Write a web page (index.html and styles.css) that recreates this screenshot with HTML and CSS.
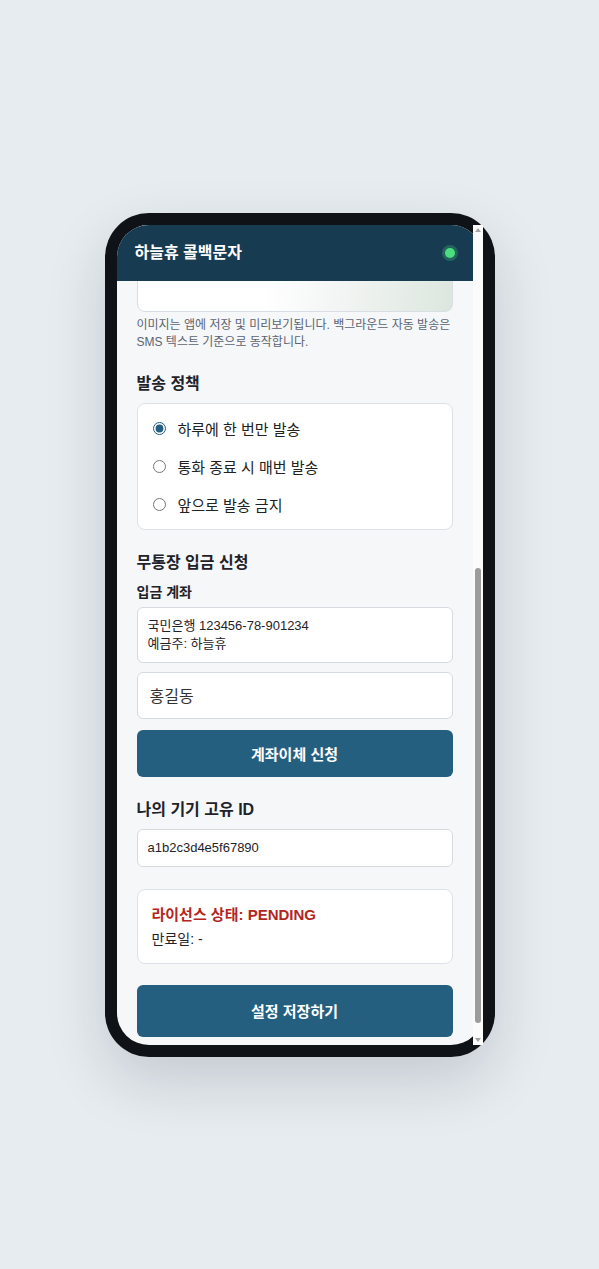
FILE: index.html
```html
<!DOCTYPE html>
<html lang="ko">
<head>
<meta charset="utf-8">
<title>하늘휴 콜백문자</title>
<link rel="stylesheet" href="styles.css">
</head>
<body>
<div class="phone">
  <div class="screen">
    <div class="scroller" id="scroller">
      <header class="app-bar">
        <h1 class="app-title">하늘휴 콜백문자</h1>
        <span class="status-dot"></span>
      </header>
      <main class="content">
        <section class="section">
          <h2 class="section-title">발신 번호</h2>
          <input class="field" type="text" value="010-1234-5678">
        </section>
        <section class="section">
          <h2 class="section-title">발송 메시지</h2>
          <textarea class="field textarea">안녕하세요, 하늘휴입니다. 지금은 통화가 어렵습니다. 확인 후 연락드리겠습니다.</textarea>
          <p class="hint">최대 90바이트까지 SMS로 발송됩니다.</p>
        </section>
        <section class="section">
          <h2 class="section-title">이미지 첨부</h2>
          <button class="btn-outline" type="button">이미지 선택</button>
          <div class="preview"></div>
          <p class="hint">이미지는 앱에 저장 및 미리보기됩니다. 백그라운드 자동 발송은 SMS 텍스트 기준으로 동작합니다.</p>
        </section>
        <section class="section">
          <h2 class="section-title">발송 정책</h2>
          <div class="card radio-card">
            <label class="radio-row"><input type="radio" name="policy" checked><span>하루에 한 번만 발송</span></label>
            <label class="radio-row"><input type="radio" name="policy"><span>통화 종료 시 매번 발송</span></label>
            <label class="radio-row"><input type="radio" name="policy"><span>앞으로 발송 금지</span></label>
          </div>
        </section>
        <section class="section">
          <h2 class="section-title">무통장 입금 신청</h2>
          <h3 class="label">입금 계좌</h3>
          <div class="account-box">국민은행 123456-78-901234<br>예금주: 하늘휴</div>
          <input class="field name-input" type="text" value="홍길동">
          <button class="btn-primary transfer-btn" type="button">계좌이체 신청</button>
        </section>
        <section class="section">
          <h2 class="section-title">나의 기기 고유 ID</h2>
          <div class="id-box">a1b2c3d4e5f67890</div>
        </section>
        <section class="section card license-card">
          <p class="license-status">라이선스 상태: PENDING</p>
          <p class="license-exp">만료일: -</p>
        </section>
        <button class="btn-primary save-btn" id="save" type="button">설정 저장하기</button>
      </main>
    </div>
    <div class="scrollbar" aria-hidden="true">
      <span class="sb-arrow sb-up"></span>
      <div class="sb-track"><div class="sb-thumb" id="thumb"></div></div>
      <span class="sb-arrow sb-down"></span>
    </div>
  </div>
</div>
<script src="script.js"></script>
</body>
</html>
```

FILE: styles.css
```css
* { box-sizing: border-box; }

html, body { margin: 0; padding: 0; }

body {
  min-height: 100vh;
  background: #e7ecf0;
  font-family: "Liberation Sans", "Noto Sans CJK KR", sans-serif;
  color: #1f2329;
  display: flex;
  align-items: center;
  justify-content: center;
}

.phone {
  width: 390px;
  height: 844px;
  padding: 12px;
  background: #0f1318;
  border-radius: 44px;
  box-shadow: 0 24px 60px rgba(15, 23, 42, 0.16);
}

.screen {
  position: relative;
  width: 100%;
  height: 100%;
  background: #f5f7f9;
  border-radius: 32px;
}

.scroller {
  position: relative;
  width: 100%;
  height: 100%;
  padding-right: 10px;
  border-radius: 32px;
  overflow-y: auto;
  scrollbar-width: none;
}

.scroller::-webkit-scrollbar { display: none; }

.app-bar {
  position: sticky;
  top: 0;
  z-index: 2;
  height: 56px;
  padding: 0 18px;
  background: #173b50;
  display: flex;
  align-items: center;
  justify-content: space-between;
}

.app-title {
  margin: 0;
  color: #ffffff;
  font-size: 16px;
  font-weight: 700;
  line-height: 22px;
}

.status-dot {
  width: 10px;
  height: 10px;
  border-radius: 50%;
  background: #4ade80;
  box-shadow: 0 0 0 3px rgba(74, 222, 128, 0.25);
}

.content {
  padding: 20px 20px 26px;
}

.section { margin-top: 22px; }
.section:first-child { margin-top: 0; }

.section-title {
  margin: 0 0 8px;
  font-size: 16px;
  font-weight: 700;
  line-height: 22px;
  color: #1f2329;
}

.label {
  margin: 0 0 5px;
  font-size: 14px;
  font-weight: 700;
  line-height: 20px;
  color: #1f2329;
}

.field {
  display: block;
  width: 100%;
  height: 44px;
  padding: 0 12px;
  border: 1px solid #d6dbe1;
  border-radius: 6px;
  background: #ffffff;
  font-family: inherit;
  font-size: 15px;
  color: #1f2329;
}

.textarea {
  height: 150px;
  padding: 10px 12px;
  resize: none;
  line-height: 20px;
}

.hint {
  margin: 5px 0 0;
  font-size: 12px;
  line-height: 17px;
  color: #5b6472;
}

.btn-outline {
  display: block;
  width: 100%;
  height: 44px;
  border: 1px solid #255f80;
  border-radius: 6px;
  background: #ffffff;
  color: #255f80;
  font-family: inherit;
  font-size: 14px;
  font-weight: 700;
}

.preview {
  margin-top: 10px;
  height: 206px;
  border: 1px solid #d9dee4;
  border-radius: 8px;
  background: linear-gradient(100deg, #ffffff 45%, #f4f6f5 65%, #dce6de 100%);
}

.card {
  background: #ffffff;
  border: 1px solid #dde2e8;
  border-radius: 8px;
}

.radio-card {
  padding: 6px 15px 5px;
}

.radio-row {
  display: flex;
  align-items: center;
  height: 38px;
  gap: 12px;
  font-size: 15px;
  color: #222;
}

.radio-row input {
  margin: 0;
  width: 13px;
  height: 13px;
  accent-color: #255f80;
}

.account-box {
  padding: 9px 10px;
  background: #ffffff;
  border: 1px solid #d6dbe1;
  border-radius: 6px;
  font-size: 13px;
  line-height: 18px;
  color: #1f2329;
}

.name-input {
  margin-top: 9px;
  height: 47px;
  font-size: 16px;
  color: #333;
}

.btn-primary {
  display: block;
  width: 100%;
  border: 0;
  border-radius: 6px;
  background: #255f80;
  color: #ffffff;
  font-family: inherit;
  font-size: 15px;
  font-weight: 700;
}

.transfer-btn {
  margin-top: 11px;
  height: 47px;
}

.id-box {
  height: 38px;
  padding: 0 10px;
  background: #ffffff;
  border: 1px solid #d6dbe1;
  border-radius: 6px;
  font-size: 13px;
  line-height: 36px;
  color: #1f2329;
}

.license-card {
  padding: 15px 14px 14px;
}

.license-status {
  margin: 0;
  font-size: 15px;
  font-weight: 700;
  line-height: 20px;
  color: #b3261e;
}

.license-exp {
  margin: 4px 0 0;
  font-size: 14px;
  line-height: 20px;
  color: #1f2329;
}

.save-btn {
  margin-top: 21px;
  height: 52px;
}

/* drawn scrollbar */
.scrollbar {
  position: absolute;
  top: 0;
  right: 0;
  bottom: 0;
  width: 10px;
  background: #fbfbfb;
  display: flex;
  flex-direction: column;
  align-items: center;
}

.sb-arrow {
  height: 12px;
  display: flex;
  justify-content: center;
}

.sb-up { align-items: flex-start; padding-top: 3px; }
.sb-down { align-items: flex-end; padding-bottom: 3px; }

.sb-up::before,
.sb-down::before {
  content: "";
  width: 0;
  height: 0;
  border-left: 3.5px solid transparent;
  border-right: 3.5px solid transparent;
}

.sb-up::before { border-bottom: 4px solid #a3a3a3; }
.sb-down::before { border-top: 4px solid #a3a3a3; }

.sb-track {
  flex: 1;
  width: 100%;
  display: flex;
  flex-direction: column;
  align-items: center;
}

.sb-thumb {
  width: 6px;
  border-radius: 3px;
  background: #9c9c9c;
}
```

FILE: script.js
```js
(function () {
  var scroller = document.getElementById('scroller');
  var save = document.getElementById('save');
  var thumb = document.getElementById('thumb');
  scroller.scrollTop = save.offsetTop + save.offsetHeight - 812;
  var track = thumb.parentNode.clientHeight;
  var total = scroller.scrollHeight;
  var view = scroller.clientHeight;
  thumb.style.height = (track * view / total) + 'px';
  thumb.style.marginTop = (track * scroller.scrollTop / total) + 'px';
})();
```
